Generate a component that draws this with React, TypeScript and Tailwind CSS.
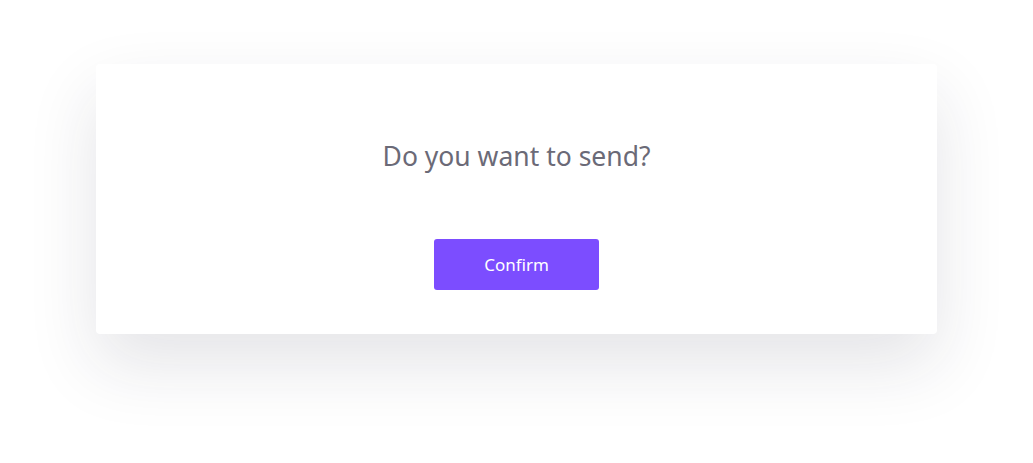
export default function App() {
  return (
    <div className="w-full min-h-[463px] bg-white px-[96px] pt-[64px]" style={{ fontFamily: '"Segoe UI", "Noto Sans", sans-serif' }}>
      <div className="flex flex-col items-center rounded bg-white pt-[74px] pb-[44px] shadow-[0_30px_70px_rgba(30,30,60,0.12)]">
        <h1 className="text-[26.5px] leading-[36px] font-normal text-[#6b6a77]">Do you want to send?</h1>
        <button className="mt-[65px] h-[51px] w-[165px] rounded-[3px] bg-[#7c4dff] text-[17px] text-white">
          Confirm
        </button>
      </div>
    </div>
  );
}
